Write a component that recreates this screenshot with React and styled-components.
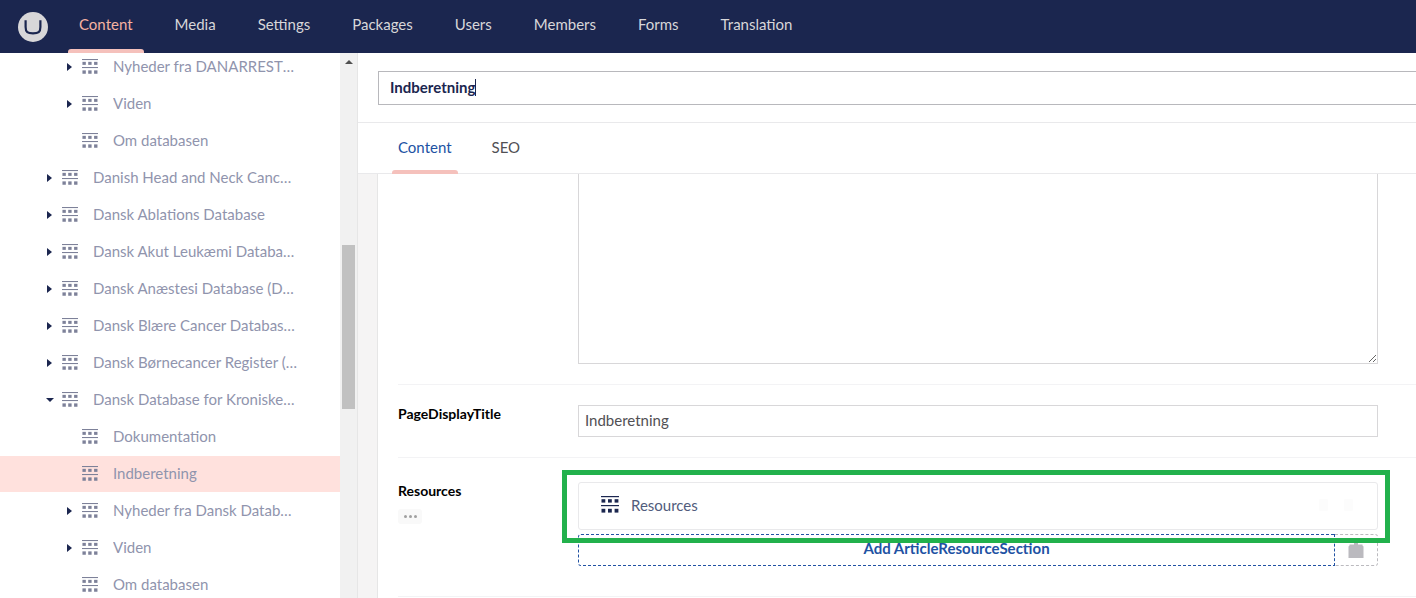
import styled, { createGlobalStyle } from "styled-components";

const navy = "#1b264f";
const peach = "#f5c1bc";

const GlobalStyle = createGlobalStyle`
    html, body {
        margin: 0;
        height: 100%;
        overflow: hidden;
        background: #fff;
    }
    body {
        font-family: Lato, "Open Sans", sans-serif;
        font-size: 15px;
        color: ${navy};
    }
    #root {
        height: 100%;
    }
`;

const Page = styled.div`
    display: flex;
    flex-direction: column;
    height: 100vh;
`;

const Header = styled.header`
    position: relative;
    z-index: 2;
    flex: none;
    display: flex;
    align-items: center;
    height: 53px;
    padding-left: 18px;
    background: ${navy};
`;

const Logo = styled.svg`
    flex: none;
    width: 30px;
    height: 30px;
    margin-right: 20px;
`;

const Nav = styled.nav`
    display: flex;
    align-self: stretch;
    gap: 20px;
`;

const NavItem = styled.a`
    position: relative;
    display: flex;
    align-items: center;
    padding: 0 11px 5px;
    color: ${(props) => (props.$active ? "#f6b3a2" : "#d8d7d9")};
    font-size: 15px;
    ${(props) =>
        props.$active &&
        `&::after {
            content: "";
            position: absolute;
            left: 0;
            right: 0;
            bottom: 0;
            height: 4px;
            border-radius: 3px 3px 0 0;
            background: ${peach};
        }`}
`;

const Body = styled.div`
    flex: 1;
    min-height: 0;
    display: flex;
`;

const Sidebar = styled.aside`
    flex: none;
    width: 340px;
    overflow: hidden;
`;

const Tree = styled.ul`
    list-style: none;
    margin: -4px 0 0;
    padding: 0;
`;

const TreeRow = styled.li`
    display: flex;
    align-items: center;
    box-sizing: border-box;
    height: 36px;
    margin-bottom: 1px;
    padding: 0 43px 0 ${(props) => props.$level * 20 + 26}px;
    background: ${(props) => (props.$selected ? "#ffe1dd" : "transparent")};
`;

const Caret = styled.span`
    flex: none;
    box-sizing: border-box;
    width: 16px;
    display: flex;
    padding-left: ${(props) => (props.$open ? "0" : "1px")};
    &::before {
        content: "";
        display: ${(props) => (props.$show ? "block" : "none")};
        border-style: solid;
        border-color: transparent;
        ${(props) =>
            props.$open
                ? `border-width: 4.5px 4px 0 4px; border-top-color: ${navy};`
                : `border-width: 4px 0 4px 5px; border-left-color: ${navy};`}
    }
`;

const TreeLabel = styled.span`
    min-width: 0;
    margin-left: 15px;
    padding-bottom: 2px;
    overflow: hidden;
    white-space: nowrap;
    text-overflow: ellipsis;
    color: #9094ad;
    font-size: 15px;
`;

const DocIconSvg = styled.svg`
    flex: none;
    width: ${(props) => props.$size}px;
    height: ${(props) => props.$size}px;
    fill: ${(props) => props.$color};
`;

function DocIcon({ size = 16, color = "#7d8199" }) {
    return (
        <DocIconSvg $size={size} $color={color} viewBox="0 0 18 18">
            <rect x="0" y="0" width="18" height="1.2" />
            <rect x="0.5" y="3.2" width="3.8" height="3.4" />
            <rect x="7" y="3.2" width="3.8" height="3.4" />
            <rect x="13.6" y="3.2" width="3.8" height="3.4" />
            <rect x="0" y="9" width="18" height="1.2" />
            <rect x="0.5" y="12.8" width="3.8" height="3.8" />
            <rect x="7" y="12.8" width="3.8" height="3.8" />
            <rect x="13.6" y="12.8" width="3.8" height="3.8" />
        </DocIconSvg>
    );
}

const ScrollTrack = styled.div`
    flex: none;
    width: 18px;
    box-sizing: border-box;
    padding-top: 7px;
    background: #f1f1f1;
    border-right: 1px solid #e6e6e6;
`;

const ScrollArrow = styled.div`
    width: 0;
    margin: 0 auto;
    border-style: solid;
    border-width: 0 4px 4px 4px;
    border-color: transparent transparent #505050 transparent;
`;

const ScrollThumb = styled.div`
    height: 164px;
    margin: 181px 2px 0;
    background: #c1c1c1;
`;

const Main = styled.main`
    flex: 1;
    min-width: 0;
    display: flex;
    flex-direction: column;
`;

const NameBar = styled.div`
    flex: none;
    height: 70px;
    box-sizing: border-box;
    padding: 18px 0 0 20px;
    border-bottom: 1px solid #e9e9eb;
`;

const NameField = styled.div`
    display: flex;
    align-items: center;
    box-sizing: border-box;
    width: 1100px;
    height: 34px;
    padding: 0 0 2px 11px;
    border: 1px solid #b8b8bc;
    color: ${navy};
    font-size: 15px;
    font-weight: 700;
`;

const TextCaret = styled.span`
    width: 1px;
    height: 17px;
    background: ${navy};
`;

const Tabs = styled.div`
    flex: none;
    display: flex;
    gap: 28px;
    height: 51px;
    box-sizing: border-box;
    padding-left: 34px;
    border-bottom: 1px solid #e9e9eb;
`;

const Tab = styled.a`
    position: relative;
    display: flex;
    align-items: center;
    padding: 0 6px 3px;
    color: ${(props) => (props.$active ? "#2152a3" : "#515054")};
    font-size: 15px;
    ${(props) =>
        props.$active &&
        `&::after {
            content: "";
            position: absolute;
            left: 0;
            right: 0;
            bottom: -1px;
            height: 4px;
            border-radius: 3px 3px 0 0;
            background: ${peach};
        }`}
`;

const Content = styled.div`
    flex: 1;
    min-height: 0;
    overflow: hidden;
    padding-left: 20px;
    background: #f5f4f4;
`;

const Panel = styled.div`
    height: 100%;
    padding-left: 20px;
    background: #fff;
    border-left: 1px solid #e6e6e6;
    margin-left: -1px;
`;

const Property = styled.div`
    display: flex;
    padding: ${(props) => (props.$clipped ? "0" : "20px")} 38px 20px 0;
    border-bottom: 1px solid #f3f3f5;
    ${(props) => props.$tall && "padding-top: 24px; padding-bottom: 30px;"}
`;

const PropertyLabel = styled.div`
    flex: none;
    width: 180px;
`;

const LabelText = styled.div`
    margin-top: -1px;
    color: #000;
    font-size: 14px;
    font-weight: 700;
    line-height: 19px;
`;

const MoreButton = styled.div`
    display: flex;
    align-items: center;
    justify-content: center;
    gap: 2px;
    width: 24px;
    height: 15px;
    margin-top: 9px;
    border-radius: 3px;
    background: #f9f9f9;
`;

const MoreDot = styled.span`
    width: 3px;
    height: 3px;
    border-radius: 50%;
    background: #a0a0a0;
`;

const PropertyEditor = styled.div`
    position: relative;
    flex: 1;
    min-width: 0;
`;

const TextArea = styled.textarea`
    display: block;
    box-sizing: border-box;
    width: 100%;
    height: 192px;
    margin-top: -2px;
    padding: 8px;
    border: 1px solid #d8d7d9;
    outline: none;
    resize: vertical;
    background: #fff;
`;

const TextInput = styled.input`
    display: block;
    box-sizing: border-box;
    width: 100%;
    height: 32px;
    padding: 0 6px 2px;
    border: 1px solid #d8d7d9;
    outline: none;
    color: #515054;
    font-family: inherit;
    font-size: 15px;
`;

const BlockCard = styled.div`
    display: flex;
    align-items: center;
    gap: 12px;
    box-sizing: border-box;
    height: 48px;
    padding: 0 0 2px 22px;
    border: 1px solid #e9e9eb;
    border-radius: 3px;
    color: #515c7c;
    font-size: 15px;
`;

const BlockName = styled.span`
    flex: 1;
`;

const FaintActions = styled.div`
    display: flex;
    gap: 16px;
    padding-right: 24px;
`;

const FaintAction = styled.span`
    width: 9px;
    height: 12px;
    border-radius: 1px;
    background: #fcfcfc;
`;

const ActionsRow = styled.div`
    display: flex;
    height: 32px;
    margin-top: 4px;
`;

const AddButton = styled.button`
    flex: 1;
    padding: 0 0 5px;
    border: 1px dashed #2152a3;
    border-radius: 3px 0 0 3px;
    background: #fff;
    color: #2152a3;
    font-family: inherit;
    font-size: 15px;
    font-weight: 700;
`;

const PasteButton = styled.div`
    flex: none;
    display: flex;
    justify-content: center;
    box-sizing: border-box;
    width: 43px;
    padding-top: 7px;
    border: 1px dashed #bbbabf;
    border-left: none;
    border-radius: 0 3px 3px 0;
`;

const PasteIcon = styled.svg`
    width: 16px;
    height: 18px;
    fill: #bbbabf;
`;

const Highlight = styled.div`
    position: absolute;
    left: -16px;
    top: -12px;
    width: 828px;
    height: 73px;
    box-sizing: border-box;
    border: 5px solid #22b14c;
    pointer-events: none;
`;

const navItems = ["Content", "Media", "Settings", "Packages", "Users", "Members", "Forms", "Translation"];

const treeItems = [
    { level: 2, label: "Nyheder fra DANARRESTEN", arrow: true },
    { level: 2, label: "Viden", arrow: true },
    { level: 2, label: "Om databasen" },
    { level: 1, label: "Danish Head and Neck Cancer Database", arrow: true },
    { level: 1, label: "Dansk Ablations Database", arrow: true },
    { level: 1, label: "Dansk Akut Leukæmi Database", arrow: true },
    { level: 1, label: "Dansk Anæstesi Database (DAD)", arrow: true },
    { level: 1, label: "Dansk Blære Cancer Database (DaBlaCa)", arrow: true },
    { level: 1, label: "Dansk Børnecancer Register (DBCR)", arrow: true },
    { level: 1, label: "Dansk Database for Kroniske Nyresygdomme", arrow: true, open: true },
    { level: 2, label: "Dokumentation" },
    { level: 2, label: "Indberetning", selected: true },
    { level: 2, label: "Nyheder fra Dansk Database", arrow: true },
    { level: 2, label: "Viden", arrow: true },
    { level: 2, label: "Om databasen" },
];

function App() {
    return (
        <Page>
            <GlobalStyle />
            <Header>
                <Logo viewBox="0 0 30 30">
                    <circle cx="15" cy="15" r="15" fill="#d8d7d9" />
                    <path
                        d="M7.6 8.2 L7.6 15 C7.6 20.2 9.6 21.4 15 21.4 C20.4 21.4 22.4 20.2 22.4 15 L22.4 8.2"
                        fill="none"
                        stroke={navy}
                        strokeWidth="2.2"
                    />
                </Logo>
                <Nav>
                    {navItems.map((item, i) => (
                        <NavItem key={item} $active={i === 0}>
                            {item}
                        </NavItem>
                    ))}
                </Nav>
            </Header>
            <Body>
                <Sidebar>
                    <Tree>
                        {treeItems.map((item, i) => (
                            <TreeRow key={i} $level={item.level} $selected={item.selected}>
                                <Caret $show={item.arrow} $open={item.open} />
                                <DocIcon />
                                <TreeLabel>{item.label}</TreeLabel>
                            </TreeRow>
                        ))}
                    </Tree>
                </Sidebar>
                <ScrollTrack>
                    <ScrollArrow />
                    <ScrollThumb />
                </ScrollTrack>
                <Main>
                    <NameBar>
                        <NameField>
                            Indberetning
                            <TextCaret />
                        </NameField>
                    </NameBar>
                    <Tabs>
                        <Tab $active>Content</Tab>
                        <Tab>SEO</Tab>
                    </Tabs>
                    <Content>
                        <Panel>
                            <Property $clipped>
                                <PropertyLabel />
                                <PropertyEditor>
                                    <TextArea readOnly />
                                </PropertyEditor>
                            </Property>
                            <Property>
                                <PropertyLabel>
                                    <LabelText>PageDisplayTitle</LabelText>
                                </PropertyLabel>
                                <PropertyEditor>
                                    <TextInput readOnly value="Indberetning" />
                                </PropertyEditor>
                            </Property>
                            <Property $tall>
                                <PropertyLabel>
                                    <LabelText>Resources</LabelText>
                                    <MoreButton>
                                        <MoreDot />
                                        <MoreDot />
                                        <MoreDot />
                                    </MoreButton>
                                </PropertyLabel>
                                <PropertyEditor>
                                    <BlockCard>
                                        <DocIcon size={18} color={navy} />
                                        <BlockName>Resources</BlockName>
                                        <FaintActions>
                                            <FaintAction />
                                            <FaintAction />
                                        </FaintActions>
                                    </BlockCard>
                                    <ActionsRow>
                                        <AddButton>Add ArticleResourceSection</AddButton>
                                        <PasteButton>
                                            <PasteIcon viewBox="0 0 16 18">
                                                <path d="M6 0h4v2.5h4.5v1l1 1V16H0.5V4.5l1-1v-1H6z" />
                                            </PasteIcon>
                                        </PasteButton>
                                    </ActionsRow>
                                    <Highlight />
                                </PropertyEditor>
                            </Property>
                        </Panel>
                    </Content>
                </Main>
            </Body>
        </Page>
    );
}

export default App;
